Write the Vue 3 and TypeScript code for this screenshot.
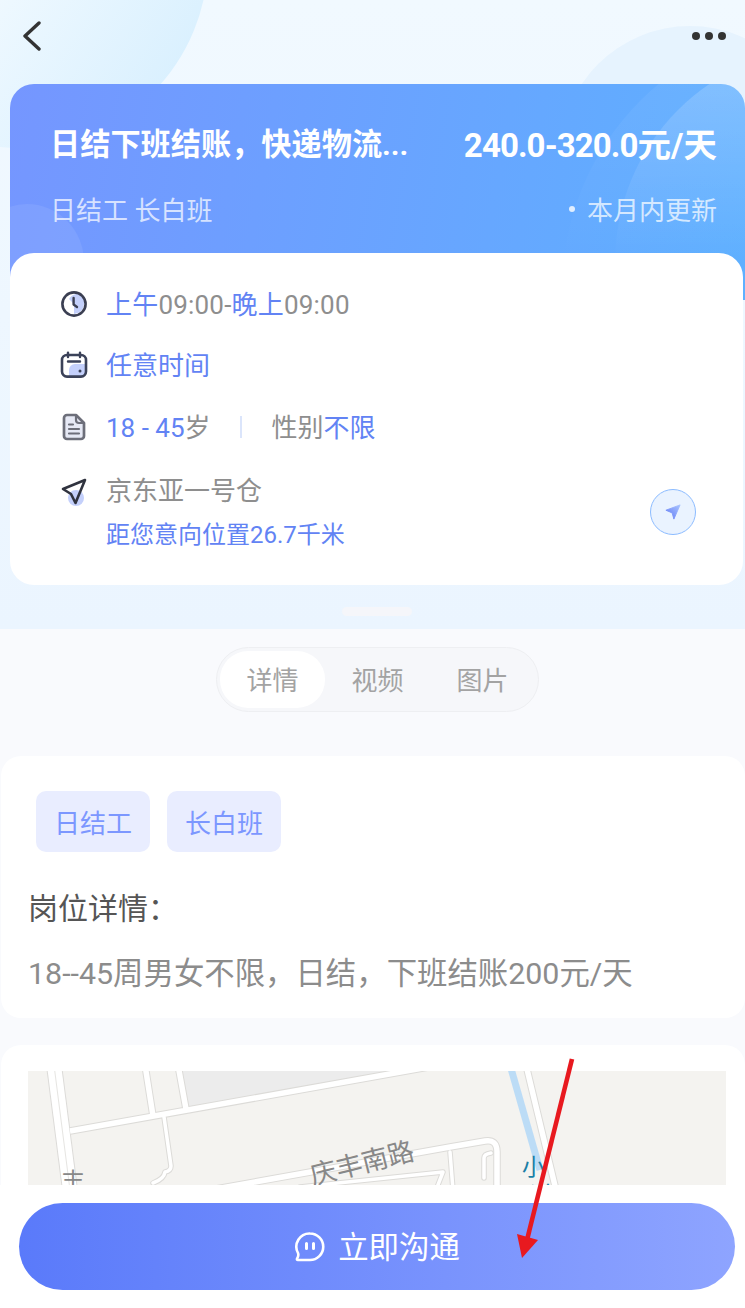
<script setup lang="ts">
const tabs = ['详情', '视频', '图片']
const tags = ['日结工', '长白班']
const roads = 'M178 1065 L186 1109 M145 1065 L153 1116 M70 1131 L440 1065 M210 1190 L450 1147 L485 1141 Q497 1139 497 1152 V1190 M526 1065 L556 1190'
const lanes = 'M164 1117 L171 1166 Q171 1171 165 1172 Q164 1179 153 1183 M300 1187 L443 1172 L436 1190 M450 1152 L453 1190 M484 1178 V1158 Q484 1154 491 1153'
</script>

<template>
  <div class="page">
    <section class="hero">
      <div class="blob blob-a"></div>
      <div class="blob blob-b"></div>
      <header class="topbar">
        <svg class="back" width="22" height="30" viewBox="0 0 22 30"><path d="M18 2 L4 15 L18 28" fill="none" stroke="#333" stroke-width="3.4" stroke-linecap="round" stroke-linejoin="round"/></svg>
        <div class="dots"><i></i><i></i><i></i></div>
      </header>
      <div class="job">
        <div class="job-blue">
          <div class="swirl swirl-a"></div>
          <div class="swirl swirl-b"></div>
          <div class="swirl swirl-c"></div>
          <div class="job-line first">
            <span class="title">日结下班结账，快递物流...</span>
            <span class="price"><span class="num">240.0-320.0</span>元/天</span>
          </div>
          <div class="job-line second">
            <span class="sub">日结工 长白班</span>
            <span class="updated"><i></i>本月内更新</span>
          </div>
        </div>
        <div class="job-white">
          <div class="row">
            <svg class="ico" width="28" height="28" viewBox="0 0 28 28"><path d="M14 14 V24 A10 10 0 0 0 24 14 V6 A10 10 0 0 0 9 9Z" fill="#c4d0fb"/><circle cx="14" cy="14" r="11.6" fill="none" stroke="#3b3f52" stroke-width="2.6"/><path d="M13.6 8 V14.6 L17 17" fill="none" stroke="#3b3f52" stroke-width="2.4" stroke-linecap="round" stroke-linejoin="round"/></svg>
            <span class="time"><b>上午</b>09:00-<b>晚上</b>09:00</span>
          </div>
          <div class="row">
            <svg class="ico" width="28" height="28" viewBox="0 0 28 28"><path d="M9 26 V19 A6 6 0 0 1 15 13 H25 V23 A3 3 0 0 1 22 26Z" fill="#c4d0fb"/><rect x="2" y="4" width="24" height="21.6" rx="5" fill="none" stroke="#3b4259" stroke-width="2.6"/><path d="M8 1.6 V6 M20 1.6 V6 M8 10.5 H20" fill="none" stroke="#3b4259" stroke-width="2.4" stroke-linecap="round"/><circle cx="20" cy="20" r="1.5" fill="#3b4259"/></svg>
            <span class="blue">任意时间</span>
          </div>
          <div class="row">
            <svg class="ico" width="28" height="28" viewBox="0 0 28 28"><path d="M7 2 H16 L24 10 V23 A3 3 0 0 1 21 26 H7 A3 3 0 0 1 4 23 V5 A3 3 0 0 1 7 2Z" fill="#e6e9f5" stroke="#6d6f7a" stroke-width="2.7" stroke-linejoin="round"/><path d="M16 2.5 V7 A3 3 0 0 0 19 10 H23.5" fill="none" stroke="#6d6f7a" stroke-width="2.2"/><path d="M9 11.5 H13 M9 16 H19 M9 20.5 H19" stroke="#6d6f7a" stroke-width="2.2" stroke-linecap="round"/></svg>
            <span><b>18 - 45</b>岁</span>
            <i class="divider"></i>
            <span>性别<b>不限</b></span>
          </div>
          <div class="row place">
            <svg class="ico" width="28" height="30" viewBox="0 0 28 30"><circle cx="16" cy="20" r="8" fill="#c4d0fb"/><path d="M25 2 L3 11 L11 16 L15.5 25 Z" fill="none" stroke="#30333f" stroke-width="2.6" stroke-linejoin="round"/></svg>
            <div class="place-text">
              <span>京东亚一号仓</span>
              <span class="dist">距您意向位置26.7千米</span>
            </div>
            <div class="nav">
              <svg width="16" height="16" viewBox="0 0 18 18"><defs><linearGradient id="nv" x1="0" y1="1" x2="1" y2="0"><stop offset="0" stop-color="#5f78f5"/><stop offset="1" stop-color="#a9c4ff"/></linearGradient></defs><path d="M17 1 L1 7 L8 10 L10 17Z" fill="url(#nv)" stroke="url(#nv)" stroke-linejoin="round"/></svg>
            </div>
          </div>
        </div>
        <div class="handle"></div>
      </div>
    </section>

    <main class="body">
      <div class="tabs">
        <span v-for="(t, i) in tabs" :key="t" class="tab" :class="{ active: i === 0 }">{{ t }}</span>
      </div>
      <section class="detail">
        <div class="tags"><span v-for="t in tags" :key="t" class="tag">{{ t }}</span></div>
        <h2>岗位详情：</h2>
        <p>18--45周男女不限，日结，下班结账200元/天</p>
      </section>
      <section class="map-card">
        <svg class="map" width="698" height="114" viewBox="28 1071 698 114">
          <rect x="28" y="1071" width="698" height="114" fill="#f4f3f0"/>
          <path d="M178 1071 L187 1108 L400 1071Z" fill="#ececec"/>
          <path d="M54 1065 L70 1190" fill="none" stroke="#dcdbd8" stroke-width="16"/>
          <path d="M54 1065 L70 1190" fill="none" stroke="#fff" stroke-width="14"/>
          <path d="M54 1065 L70 1190" fill="none" stroke="#e6e5e2" stroke-width="1"/>
          <path :d="roads" fill="none" stroke="#dcdbd8" stroke-width="7.5" stroke-linejoin="round"/>
          <path :d="lanes" fill="none" stroke="#dcdbd8" stroke-width="5.5" stroke-linejoin="round" stroke-linecap="round"/>
          <path d="M510 1065 L540 1170" stroke="#bcdcf6" stroke-width="7" fill="none"/>
          <path :d="roads" fill="none" stroke="#fff" stroke-width="5.5" stroke-linejoin="round"/>
          <path :d="lanes" fill="none" stroke="#fff" stroke-width="3.5" stroke-linejoin="round" stroke-linecap="round"/>
          <text class="mt" x="362" y="1172.5" transform="rotate(-14 362 1163)" text-anchor="middle">庆丰南路</text>
          <text class="ml" x="61" y="1190">丰</text>
          <text class="mw"><tspan x="522" y="1175">小</tspan><tspan x="530" y="1203">道</tspan></text>
        </svg>
      </section>
    </main>

    <footer class="foot">
      <button class="cta">
        <svg width="32" height="32" viewBox="0 0 32 32"><path d="M16 2.5 A13.2 13.2 0 1 1 16 29 H4 Q2.4 29 3.2 27.4 Q5 24.5 4 22 A13.2 13.2 0 0 1 16 2.5Z" fill="none" stroke="#fff" stroke-width="2.6" stroke-linejoin="round"/><path d="M12.5 12.5 V17.5 M19.5 12.5 V17.5" stroke="#fff" stroke-width="3" stroke-linecap="round"/></svg>
        <span class="cta-text">立即沟通</span>
      </button>
    </footer>

    <svg class="arrow" width="745" height="1308" viewBox="0 0 745 1308"><path d="M572 1059 L527 1240" stroke="#e8191f" stroke-width="4.6" fill="none"/><path d="M522 1258 L517 1234 L538 1240Z" fill="#e8191f"/></svg>
  </div>
</template>

<style>
html, body { margin: 0; background: #fff; }
</style>

<style scoped>
.page {
  position: relative;
  width: 745px;
  height: 1308px;
  overflow: hidden;
  background: #f9fafd;
  font-family: Roboto, "Noto Sans CJK SC", sans-serif;
  color: #8e8e8e;
}
.hero {
  position: relative;
  height: 629px;
  background: linear-gradient(180deg, #f1f9ff 0%, #ebf5ff 100%);
  overflow: hidden;
}
.blob { position: absolute; border-radius: 50%; }
.blob-a { left: -170px; top: -230px; width: 378px; height: 378px; background: linear-gradient(125deg, #f2faff 45%, #d2edfe 100%); }
.blob-b { left: 560px; top: 26px; width: 260px; height: 260px; background: #e6f3fe; }
.topbar {
  position: relative;
  height: 84px;
  display: flex;
  justify-content: space-between;
  align-items: flex-start;
  padding: 21px 19px 0 21px;
  box-sizing: border-box;
}
.dots { display: flex; gap: 5px; margin-top: 11px; }
.dots i { width: 8px; height: 8px; border-radius: 50%; background: #333; }
.job { position: relative; margin-left: 10px; }
.job-blue {
  position: relative;
  height: 216px;
  box-sizing: border-box;
  padding: 40px 28px 0 42px;
  border-radius: 24px 24px 0 0;
  background: linear-gradient(100deg, #7596ff 0%, #5eb0ff 100%);
  overflow: hidden;
  color: #fff;
}
.swirl { position: absolute; border-radius: 50%; }
.swirl-a { left: 605px; top: -37px; width: 430px; height: 430px; background: linear-gradient(180deg, rgba(255,255,255,.16) 10%, rgba(255,255,255,0) 50%); }
.swirl-b { left: 552px; top: -62px; width: 536px; height: 536px; background: linear-gradient(180deg, rgba(255,255,255,.06) 10%, rgba(255,255,255,0) 45%); }
.swirl-c { left: -40px; top: 120px; width: 114px; height: 116px; background: rgba(255,255,255,.08); }
.job-line { position: relative; display: flex; justify-content: space-between; align-items: center; }
.first { height: 36px; }
.second { height: 36px; margin-top: 30px; font-size: 26px; color: rgba(255,255,255,.72); }
.sub { margin-left: -2px; }
.title { font-size: 30.2px; font-weight: 700; margin-left: -2px; white-space: nowrap; }
.price { font-size: 33.5px; font-weight: 700; white-space: nowrap; }
.num { font-size: 33px; letter-spacing: -0.9px; }
.updated { display: flex; align-items: center; gap: 12px; }
.updated i { width: 6px; height: 6px; border-radius: 50%; background: rgba(255,255,255,.8); margin-top: 2px; }
.job-white {
  position: relative;
  margin-top: -47px;
  width: 733px;
  height: 332px;
  box-sizing: border-box;
  padding: 29px 0 0 50px;
  background: #fff;
  border-radius: 24px;
  display: flex;
  flex-direction: column;
  font-size: 26px;
}
.job-white b, .blue { font-weight: 400; color: #6283f4; }
.time { letter-spacing: .2px; }
.row { display: flex; align-items: center; height: 40px; margin-bottom: 21.5px; }
.ico { flex: none; margin: 3px 18px 0 0; }
.divider { width: 2px; height: 22px; background: #dbe5fb; margin: 4px 30px 0 29px; }
.place { align-items: flex-start; height: auto; position: relative; margin: 0; }
.place .ico { margin-top: 11px; }
.place-text { display: flex; flex-direction: column; gap: 9px; padding-top: 6px; }
.place-text span:first-child { line-height: 36px; }
.dist { font-size: 24px; color: #6283f4; line-height: 34px; }
.nav {
  position: absolute;
  left: 590px;
  top: 22px;
  width: 46px;
  height: 46px;
  box-sizing: border-box;
  border: 1px solid #8cbcff;
  border-radius: 50%;
  background: #eaf3ff;
  display: flex;
  align-items: center;
  justify-content: center;
}
.handle { width: 70px; height: 9px; border-radius: 5px; background: #f5f6fa; margin: 22px 0 0 332px; }
.body { display: flex; flex-direction: column; align-items: stretch; }
.tabs {
  align-self: flex-start;
  margin: 18px 0 0 216px;
  width: 323px;
  height: 65px;
  box-sizing: border-box;
  padding: 3px;
  display: flex;
  border: 1px solid #eeeff2;
  border-radius: 33px;
  background: #f6f7fa;
}
.tab { width: 105px; display: flex; align-items: center; justify-content: center; font-size: 26px; color: #a3a3a3; padding-bottom: 2px; box-sizing: border-box; }
.tab.active { background: #fff; border-radius: 28px; }
.detail {
  margin: 44px 0 0 1px;
  height: 262px;
  box-sizing: border-box;
  padding: 35px 0 0 28px;
  background: #fff;
  border-radius: 20px;
}
.tags { display: flex; gap: 17px; padding-left: 7px; }
.tag {
  width: 114px;
  height: 61px;
  display: flex;
  align-items: center;
  justify-content: center;
  background: #e9edff;
  border-radius: 10px;
  color: #7c97ff;
  font-size: 26px;
  padding-bottom: 1px;
  box-sizing: border-box;
}
h2 { margin: 32px 0 0 -1px; font-size: 30px; line-height: 50px; font-weight: 400; color: #555; }
p { margin: 15px 0 0 -1px; font-size: 30.4px; line-height: 50px; color: #8c8c8c; white-space: nowrap; }
.map-card {
  margin: 27px 0 0 1px;
  height: 200px;
  padding: 26px 0 0 27px;
  background: #fff;
  border-radius: 20px;
}
.map { display: block; }
.mt { font-size: 26.5px; fill: #888; font-family: "Noto Sans CJK SC", sans-serif; }
.ml { font-size: 24px; fill: #888; font-family: "Noto Sans CJK SC", sans-serif; }
.mw { font-size: 23px; fill: #1b7fa6; font-family: "Noto Sans CJK SC", sans-serif; }
.foot {
  position: absolute;
  left: 0;
  right: 0;
  bottom: 0;
  height: 123px;
  box-sizing: border-box;
  background: #fff;
  padding: 18px 10px 0 19px;
}
.cta {
  width: 716px;
  height: 87px;
  border: 0;
  border-radius: 44px;
  background: linear-gradient(90deg, #5a7afa 0%, #8ea4ff 100%);
  color: #fff;
  font-family: inherit;
  font-size: 30.4px;
  display: flex;
  align-items: center;
  justify-content: center;
  gap: 12px;
  padding: 0;
}
.cta-text { margin-top: -3px; }
.arrow { position: absolute; left: 0; top: 0; pointer-events: none; }
</style>
